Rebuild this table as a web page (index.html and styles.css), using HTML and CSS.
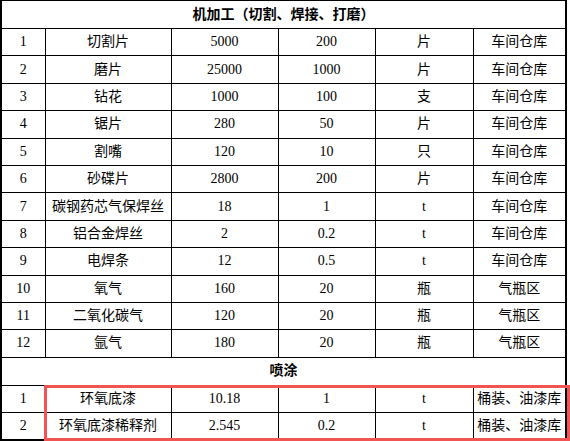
FILE: index.html
```html
<!DOCTYPE html>
<html lang="zh">
<head>
<meta charset="utf-8">
<link rel="stylesheet" href="styles.css">
</head>
<body>
<div class="sheet">
  <table class="grid">
    <colgroup>
      <col class="c1"><col class="c2"><col class="c3"><col class="c4"><col class="c5"><col class="c6">
    </colgroup>
    <tr class="sec first"><td colspan="6">机加工（切割、焊接、打磨）</td></tr>
    <tr><td>1</td><td>切割片</td><td>5000</td><td>200</td><td>片</td><td>车间仓库</td></tr>
    <tr><td>2</td><td>磨片</td><td>25000</td><td>1000</td><td>片</td><td>车间仓库</td></tr>
    <tr><td>3</td><td>钻花</td><td>1000</td><td>100</td><td>支</td><td>车间仓库</td></tr>
    <tr><td>4</td><td>锯片</td><td>280</td><td>50</td><td>片</td><td>车间仓库</td></tr>
    <tr><td>5</td><td>割嘴</td><td>120</td><td>10</td><td>只</td><td>车间仓库</td></tr>
    <tr><td>6</td><td>砂碟片</td><td>2800</td><td>200</td><td>片</td><td>车间仓库</td></tr>
    <tr><td>7</td><td>碳钢药芯气保焊丝</td><td>18</td><td>1</td><td>t</td><td>车间仓库</td></tr>
    <tr><td>8</td><td>铝合金焊丝</td><td>2</td><td>0.2</td><td>t</td><td>车间仓库</td></tr>
    <tr><td>9</td><td>电焊条</td><td>12</td><td>0.5</td><td>t</td><td>车间仓库</td></tr>
    <tr><td>10</td><td>氧气</td><td>160</td><td>20</td><td>瓶</td><td>气瓶区</td></tr>
    <tr><td>11</td><td>二氧化碳气</td><td>120</td><td>20</td><td>瓶</td><td>气瓶区</td></tr>
    <tr><td>12</td><td>氩气</td><td>180</td><td>20</td><td>瓶</td><td>气瓶区</td></tr>
    <tr class="sec"><td colspan="6">喷涂</td></tr>
    <tr><td>1</td><td>环氧底漆</td><td>10.18</td><td>1</td><td>t</td><td>桶装、油漆库</td></tr>
    <tr><td>2</td><td>环氧底漆稀释剂</td><td>2.545</td><td>0.2</td><td>t</td><td>桶装、油漆库</td></tr>
  </table>
  <div class="highlight"></div>
</div>
</body>
</html>
```

FILE: styles.css
```css
html, body {
  margin: 0;
  padding: 0;
  background: #ffffff;
}

.sheet {
  position: relative;
  width: 570px;
  height: 441px;
  overflow: hidden;
}

.grid {
  border-collapse: collapse;
  table-layout: fixed;
  width: 567px;
  border-left: 2px solid #000;
  border-right: 2px solid #000;
  border-top: 1px solid #000;
  border-bottom: 2px solid #000;
  font-family: "Liberation Serif", "Noto Sans CJK SC", serif;
  font-size: 14px;
  color: #000;
}

.c1 { width: 44px; }
.c2 { width: 126px; }
.c3 { width: 107px; }
.c4 { width: 97px; }
.c5 { width: 98px; }
.c6 { width: 93px; }

.grid td {
  border: 1px solid #000;
  height: 26.4px;
  padding: 0;
  text-align: center;
  vertical-align: middle;
  line-height: 16px;
  white-space: nowrap;
  overflow: hidden;
}

.grid .sec td {
  font-weight: bold;
  height: 27px;
}

.grid .sec.first td {
  height: 27px;
}

.highlight {
  position: absolute;
  left: 44px;
  top: 385px;
  width: 526px;
  height: 56px;
  box-sizing: border-box;
  border: 3px solid #f25454;
}
```
